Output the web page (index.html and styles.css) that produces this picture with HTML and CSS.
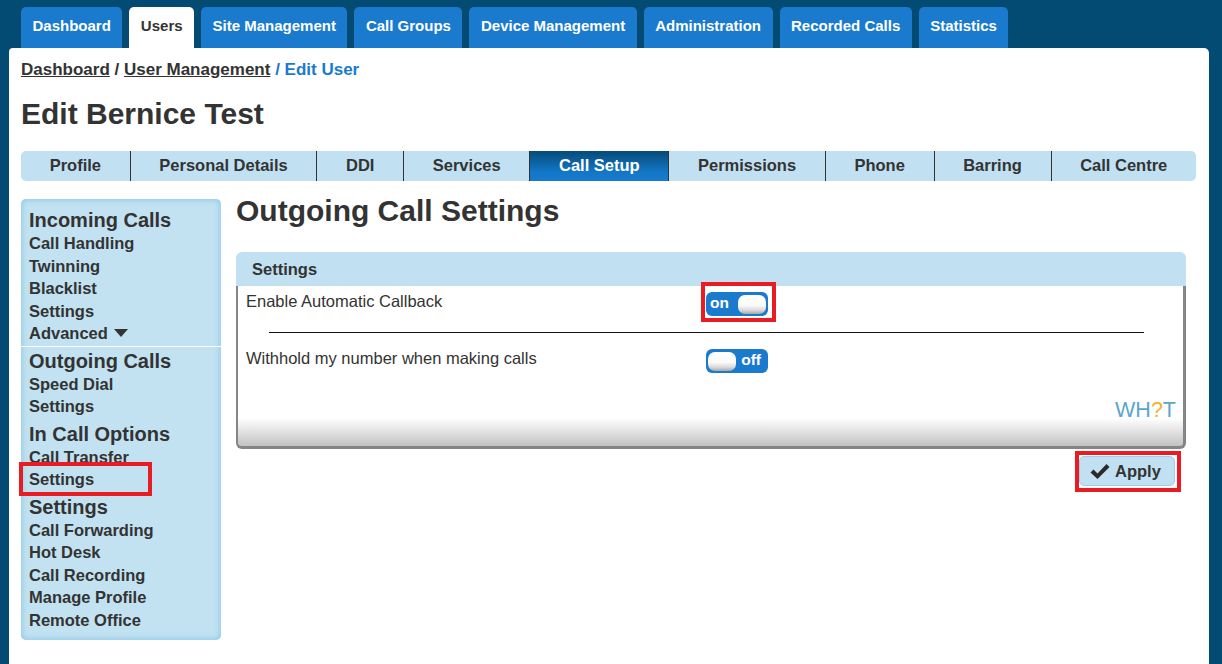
FILE: index.html
```html
<!DOCTYPE html>
<html lang="en">
<head>
<meta charset="utf-8">
<title>Edit User</title>
<link rel="stylesheet" href="styles.css">
</head>
<body>
<nav class="topnav">
  <a class="tab">Dashboard</a>
  <a class="tab active">Users</a>
  <a class="tab">Site Management</a>
  <a class="tab">Call Groups</a>
  <a class="tab">Device Management</a>
  <a class="tab">Administration</a>
  <a class="tab">Recorded Calls</a>
  <a class="tab">Statistics</a>
</nav>

<main class="page">
  <div class="crumbs">
    <a class="crumb-link">Dashboard</a> / <a class="crumb-link">User Management</a><span class="crumb-current"> / Edit User</span>
  </div>

  <h1 class="title">Edit Bernice Test</h1>

  <ul class="subnav">
    <li class="subnav-item">Profile</li>
    <li class="subnav-item">Personal Details</li>
    <li class="subnav-item">DDI</li>
    <li class="subnav-item">Services</li>
    <li class="subnav-item active">Call Setup</li>
    <li class="subnav-item">Permissions</li>
    <li class="subnav-item">Phone</li>
    <li class="subnav-item">Barring</li>
    <li class="subnav-item">Call Centre</li>
  </ul>

  <div class="content">
    <aside class="sidebar">
      <div class="side-head first">Incoming Calls</div>
      <a class="side-link">Call Handling</a>
      <a class="side-link">Twinning</a>
      <a class="side-link">Blacklist</a>
      <a class="side-link">Settings</a>
      <a class="side-link">Advanced <svg class="caret" width="14" height="8" viewBox="0 0 14 8"><polygon points="0,0 14,0 7,8" fill="#333"/></svg></a>
      <div class="side-divider"></div>
      <div class="side-head">Outgoing Calls</div>
      <a class="side-link">Speed Dial</a>
      <a class="side-link">Settings</a>
      <div class="side-head">In Call Options</div>
      <a class="side-link">Call Transfer</a>
      <a class="side-link marked mark-side">Settings</a>
      <div class="side-head">Settings</div>
      <a class="side-link">Call Forwarding</a>
      <a class="side-link">Hot Desk</a>
      <a class="side-link">Call Recording</a>
      <a class="side-link">Manage Profile</a>
      <a class="side-link">Remote Office</a>
    </aside>

    <section class="main">
      <h2 class="section-title">Outgoing Call Settings</h2>

      <div class="panel">
        <div class="panel-head">Settings</div>
        <div class="panel-body">
          <div class="row">
            <span class="row-label">Enable Automatic Callback</span>
            <span class="marked mark-toggle">
              <span class="toggle on"><span class="toggle-text">on</span><span class="knob"></span></span>
            </span>
          </div>
          <hr class="rule">
          <div class="row">
            <span class="row-label">Withhold my number when making calls</span>
            <span class="toggle off"><span class="knob"></span><span class="toggle-text">off</span></span>
          </div>
          <div class="brand">WH<span class="brand-q">?</span>T</div>
        </div>
      </div>

      <div class="actions">
        <button class="apply marked mark-apply" type="button">
          <svg class="check" width="20" height="17" viewBox="0 0 20 17"><polygon points="0.5,9.5 3.5,6.5 7.5,10.5 16.5,1 19.5,4 7.5,16" fill="#2a2a2a"/></svg>
          Apply
        </button>
      </div>
    </section>
  </div>
</main>
</body>
</html>
```

FILE: styles.css
```css
*, *::before, *::after {
  box-sizing: border-box;
}

html, body {
  margin: 0;
  padding: 0;
}

body {
  background: #034b73;
  font-family: "Liberation Sans", Arial, sans-serif;
  color: #333;
  height: 664px;
  overflow: hidden;
}

/* top-level tabs */
.topnav {
  display: flex;
  gap: 7px;
  padding: 7px 0 0 21px;
  height: 48px;
}

.tab {
  display: block;
  height: 41px;
  line-height: 38px;
  padding: 0 11.5px;
  background: #1a7ace;
  color: #fff;
  font-weight: bold;
  font-size: 15px;
  border-radius: 5px 5px 0 0;
  white-space: nowrap;
}

.tab.active {
  background: #fff;
  color: #333;
}

/* white page sheet */
.page {
  margin-left: 9px;
  width: 1200px;
  min-height: 616px;
  background: #fff;
  border-radius: 4px 5px 0 0;
  padding: 12px 13px 0 12px;
}

.crumbs {
  font-size: 17px;
  font-weight: bold;
  line-height: 20px;
  color: #333;
}

.crumb-link {
  color: #333;
  text-decoration: underline;
}

.crumb-current {
  color: #1a7ace;
}

.title {
  margin: 17px 0 20px;
  font-size: 30px;
  line-height: 34px;
  font-weight: bold;
  color: #333;
}

/* secondary tab strip */
.subnav {
  display: flex;
  list-style: none;
  margin: 0;
  padding: 0;
  height: 30px;
  background: #c1e1f2;
  border-radius: 5px;
  overflow: hidden;
}

.subnav-item {
  flex: 1 1 auto;
  text-align: center;
  font-size: 16.5px;
  font-weight: bold;
  line-height: 29px;
  color: #333;
  white-space: nowrap;
}

.subnav-item + .subnav-item {
  border-left: 1px solid #333;
}

.subnav-item.active {
  background: linear-gradient(to bottom, #064b78 0%, #1277c6 70%, #1a7ace 100%);
  color: #fff;
}

.content {
  display: flex;
  align-items: flex-start;
  gap: 15px;
  margin-top: 18px;
}

/* left menu */
.sidebar {
  flex: 0 0 200px;
  background: #c2e2f2;
  border-radius: 5px;
  box-shadow: inset 0 0 6px 1px #8fc9e6;
  padding: 9px 8px 9px 8px;
}

.side-head {
  font-size: 20px;
  font-weight: bold;
  line-height: 24px;
  margin-top: 4px;
  color: #333;
}

.side-head.first {
  margin-top: 0;
}

.side-link {
  display: block;
  font-size: 16.5px;
  font-weight: bold;
  line-height: 22.5px;
  color: #333;
  white-space: nowrap;
}

.caret {
  vertical-align: 2px;
  margin-left: 2px;
}

.side-divider {
  height: 1px;
  background: #fff;
  margin: 1px -8px -2px;
}

/* red call-out frames */
.marked {
  position: relative;
}

.marked::after {
  content: "";
  position: absolute;
  border: 4px solid #e91c24;
  pointer-events: none;
}

.mark-side::after {
  top: -6px;
  left: -10px;
  width: 133px;
  height: 34px;
}

.mark-toggle {
  display: inline-block;
  line-height: 0;
}

.mark-toggle::after {
  top: -10px;
  left: -5px;
  right: -8px;
  bottom: -6px;
}

.mark-apply::after {
  top: -6px;
  left: -5px;
  right: -7px;
  bottom: -7px;
}

/* main column */
.main {
  flex: 1 1 auto;
  margin-right: 10px;
}

.section-title {
  margin: -5px 0 24px;
  font-size: 30px;
  line-height: 34px;
  font-weight: bold;
  color: #333;
}

.panel-head {
  height: 34px;
  line-height: 34px;
  padding-left: 16px;
  background: #c1e1f2;
  border-radius: 6px 6px 0 0;
  font-size: 16.5px;
  font-weight: bold;
  color: #333;
}

.panel-body {
  border: solid #858585;
  border-width: 0 3px 3px 2px;
  border-radius: 0 0 6px 6px;
  background: linear-gradient(to bottom, #fff 0, #fff calc(100% - 28px), #f2f2f2 calc(100% - 22px), #c2c2c2 100%);
  padding: 6px 7px 24px 8px;
}

.row {
  display: flex;
  align-items: flex-start;
}

.row-label {
  flex: 0 0 460px;
  font-size: 16.5px;
  line-height: 19px;
  color: #333;
}

.toggle {
  display: inline-flex;
  align-items: center;
  justify-content: space-between;
  width: 62px;
  height: 24px;
  background: #1a7ace;
  border-radius: 6px;
  padding: 0 2px 0 4px;
  color: #fff;
  font-weight: bold;
  font-size: 15.5px;
  line-height: 24px;
}

.toggle.off {
  padding: 0 7px 0 2px;
}

.toggle-text {
  margin-top: -3px;
}

.knob {
  display: block;
  width: 28px;
  height: 19px;
  border-radius: 7px;
  background: linear-gradient(to bottom, #fff 0%, #fafafa 55%, #d9d9d9 80%, #a8a8a8 100%);
}

.rule {
  margin: 16px 0 0 23px;
  width: 875px;
  height: 0;
  border: 0;
  border-top: 1px solid #111;
}

.row + .rule + .row {
  margin-top: 16px;
}

.brand {
  margin-top: 25px;
  text-align: right;
  font-size: 21.5px;
  line-height: 24px;
  color: #5ca5cf;
}

.brand-q {
  color: #f4b21f;
}

.actions {
  display: flex;
  justify-content: flex-end;
  margin-top: 7px;
  padding-right: 11px;
}

.apply {
  display: flex;
  align-items: center;
  gap: 5px;
  width: 96px;
  height: 30px;
  padding: 0 0 0 10px;
  background: #c1e1f2;
  border: 1px solid #9fd0ea;
  border-radius: 5px;
  font-family: "Liberation Sans", Arial, sans-serif;
  font-size: 16.5px;
  font-weight: bold;
  color: #333;
}
```
